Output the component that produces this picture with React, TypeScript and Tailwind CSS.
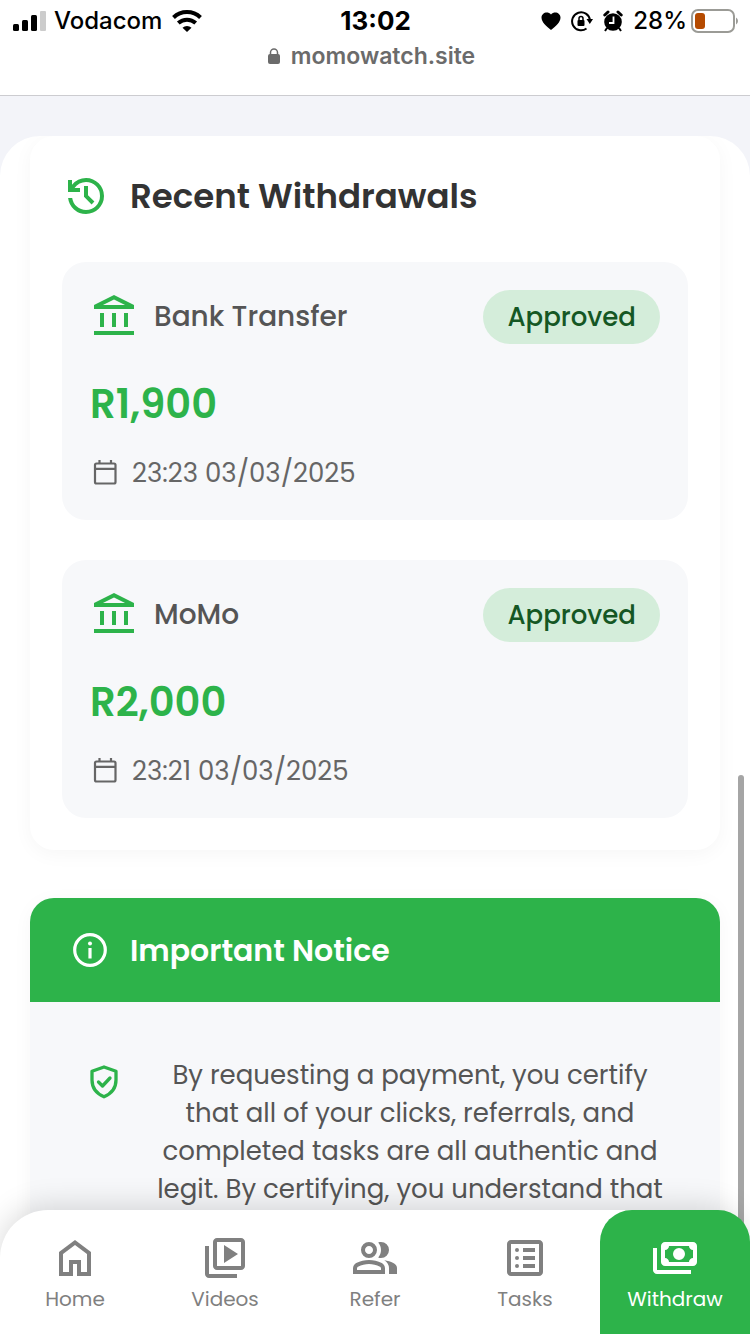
import React from "react";

type IconProps = { d: string; className: string };

function Icon({ d, className }: IconProps) {
  return (
    <svg viewBox="0 0 24 24" fill="currentColor" fillRule="evenodd" aria-hidden="true" className={className}>
      <path d={d} />
    </svg>
  );
}

const paths = {
  history:
    "M12 21q-3.45 0-6.0125-2.2875T3.05 13H5.1q.35 2.6 2.3125 4.3T12 19q2.925 0 4.9625-2.0375T19 12t-2.0375-4.9625T12 5q-1.725 0-3.225.8T6.25 8H9v2H3V4h2v2.35q1.275-1.6 3.1125-2.475T12 3q1.875 0 3.5125.7125t2.85 1.925 1.925 2.85T21 12t-.7125 3.5125-1.925 2.85-2.85 1.925T12 21m2.8-4.8L11 12.4V7h2v4.6l3.2 3.2z",
  bank: "M5 17v-7h2v7zm6 0v-7h2v7zm-9 4v-2h20v2zm15-4v-7h2v7zM2 8V6l10-5 10 5v2zm4.475-2h11.05L12 3.25z",
  home: "M6 19h3v-6h6v6h3v-9l-6-4.5L6 10zm-2 2V9l8-6 8 6v12h-7v-6h-2v6z",
  videos:
    "m11.5 14.5 7-4.5-7-4.5zM8 18q-.825 0-1.4125-.5875T6 16V4q0-.825.5875-1.4125T8 2h12q.825 0 1.4125.5875T22 4v12q0 .825-.5875 1.4125T20 18zm0-2h12V4H8zm-4 6q-.825 0-1.4125-.5875T2 20V6h2v14h14v2z",
  refer:
    "M1 20v-2.8q0-.85.4375-1.5625T2.6 14.55q1.55-.775 3.15-1.1625T9 13t3.25.3875 3.15 1.1625q.725.375 1.1625 1.0875T17 17.2V20zm18 0v-3q0-1.1-.6125-2.1125T16.65 13.15q1.275.15 2.4.5125t2.1.8875q.9.5 1.375 1.1125T23 17v3zM9 12q-1.65 0-2.825-1.175T5 8t1.175-2.825T9 4t2.825 1.175T13 8t-1.175 2.825T9 12m10-4q0 1.65-1.175 2.825T15 12q-.275 0-.7-.0625T13.6 11.8q.675-.8 1.0375-1.775T15 8t-.3625-2.025T13.6 4.2q.35-.125.7-.1625T15 4q1.65 0 2.825 1.175T19 8M3 18h12v-.8q0-.275-.1375-.5T14.5 16.35q-1.35-.675-2.725-1.0125T9 15t-2.775.3375T3.5 16.35q-.225.125-.3625.35T3 17.2zm6-8q.825 0 1.4125-.5875T11 8t-.5875-1.4125T9 6t-1.4125.5875T7 8t.5875 1.4125T9 10",
  tasks:
    "M5 21q-.825 0-1.4125-.5875T3 19V5q0-.825.5875-1.4125T5 3h14q.825 0 1.4125.5875T21 5v14q0 .825-.5875 1.4125T19 21zm0-2h14V5H5zM8 7a1 1 0 1 1 0 2 1 1 0 0 1 0-2m0 4a1 1 0 1 1 0 2 1 1 0 0 1 0-2m0 4a1 1 0 1 1 0 2 1 1 0 0 1 0-2m3-8h6v2h-6zm0 4h6v2h-6zm0 4h6v2h-6z",
  withdraw:
    "M14 13q-1.25 0-2.125-.875T11 10t.875-2.125T14 7t2.125.875T17 10t-.875 2.125T14 13m-7 3q-.825 0-1.4125-.5875T5 14V6q0-.825.5875-1.4125T7 4h14q.825 0 1.4125.5875T23 6v8q0 .825-.5875 1.4125T21 16zm2-2h10q0-.825.5875-1.4125T21 12V8q-.825 0-1.4125-.5875T19 6H9q0 .825-.5875 1.4125T7 8v4q.825 0 1.4125.5875T9 14m11 6H3q-.825 0-1.4125-.5875T1 18V7h2v11h17z",
};

function CalendarIcon() {
  return (
    <svg viewBox="0 0 30 30" fill="none" stroke="currentColor" strokeWidth="2.2" aria-hidden="true" className="size-[30px] shrink-0">
      <rect x="5" y="5.5" width="20.5" height="20" rx="1.5" />
      <path d="M5 10.800h20.500M9.500 2v3M21 2v3" />
    </svg>
  );
}

function InfoIcon() {
  return (
    <svg viewBox="0 0 40 40" fill="none" stroke="currentColor" strokeWidth="3.2" aria-hidden="true" className="size-10 shrink-0">
      <circle cx="20" cy="20" r="15.300" />
      <path d="M20 18v10.500" />
      <circle cx="20" cy="13.500" r="2" fill="currentColor" stroke="none" />
    </svg>
  );
}

function ShieldIcon() {
  return (
    <svg viewBox="0 0 40 40" fill="none" stroke="currentColor" strokeWidth="3.3" aria-hidden="true" className="mt-1.5 size-10 shrink-0 text-[#2db34a]">
      <path d="M20 5 32 9.200V18c0 8.500-5 13.800-12 16.800C13 31.800 8 26.500 8 18V9.200z" strokeLinejoin="round" />
      <path d="m14.500 20 4 4 7.500-8" strokeLinecap="round" strokeLinejoin="round" />
    </svg>
  );
}

function StatusBar() {
  return (
    <div className="grid h-[42px] grid-cols-[1fr_auto_1fr] items-center pr-[11px] pl-3 text-2xl font-medium text-black">
      <div className="flex items-center gap-2">
        <svg viewBox="0 0 34 22" aria-hidden="true" className="h-[22px] w-[34px]">
          <rect x="1" y="14" width="6" height="7" rx="1.500" />
          <rect x="10" y="10" width="6" height="11" rx="1.500" />
          <rect x="19" y="5" width="6" height="16" rx="1.500" />
          <rect x="28" y="1" width="6" height="20" rx="1" fill="#ccc" />
        </svg>
        <span>Vodacom</span>
        <svg viewBox="0 0 30 22" aria-hidden="true" className="ml-0.5 h-[22px] w-[30px]">
          <path d="M1.500 7.500a19.500 19.500 0 0 1 27 0" fill="none" stroke="black" strokeWidth="4" />
          <path d="M6.300 13a13 13 0 0 1 17.400 0" fill="none" stroke="black" strokeWidth="4" />
          <path d="M15 22l-4.500-4.300a6.500 6.500 0 0 1 9 0z" />
        </svg>
      </div>
      <span className="text-[26px] font-bold">13:02</span>
      <div className="flex items-center justify-end gap-2.5">
        <svg viewBox="0 0 20 18" aria-hidden="true" className="h-[18px] w-5">
          <path d="M10 18C5 14 .5 10 .5 5.500.5 1 6.500-1.500 10 2.500c3.500-4 9.500-1.500 9.500 3C19.500 10 15 14 10 18z" />
        </svg>
        <svg viewBox="0 0 22 22" aria-hidden="true" className="size-[22px]">
          <path d="M15.500 18.500A9 9 0 1 1 19 10" fill="none" stroke="black" strokeWidth="2" />
          <path d="M15.500 9h6.500L18.800 14z" />
          <rect x="6.500" y="10" width="7" height="6" rx="1" />
          <path d="M8 10V8.500a2 2 0 0 1 4 0V10" fill="none" stroke="black" strokeWidth="1.500" />
        </svg>
        <svg viewBox="0 0 20 22" aria-hidden="true" className="h-[22px] w-5">
          <circle cx="10" cy="12" r="8.800" />
          <path d="M1.800 5 5 2M18.200 5 15 2" stroke="black" strokeWidth="3" strokeLinecap="round" />
          <path d="m4 18-2 3M16 18l2 3" stroke="black" strokeWidth="2" />
          <path d="M10.500 6.500V13H6" fill="none" stroke="white" strokeWidth="1.800" />
        </svg>
        <span>28%</span>
        <svg viewBox="0 0 48 24" aria-hidden="true" className="-ml-1.5 h-6 w-12">
          <rect x="1" y="1" width="42" height="22" rx="6" fill="none" stroke="#9b9b96" strokeWidth="2" />
          <rect x="4" y="4" width="10" height="16" rx="3" fill="#b54a00" />
          <path d="M45 8.500q2 1 2 3.500t-2 3.500z" fill="#9b9b96" />
        </svg>
      </div>
    </div>
  );
}

type Withdrawal = { method: string; amount: string; date: string };

const withdrawals: Withdrawal[] = [
  { method: "Bank Transfer", amount: "R1,900", date: "23:23 03/03/2025" },
  { method: "MoMo", amount: "R2,000", date: "23:21 03/03/2025" },
];

function WithdrawalCard({ method, amount, date }: Withdrawal) {
  return (
    <li className="rounded-3xl bg-[#f7f8fa] p-7">
      <div className="flex items-center gap-4">
        <Icon d={paths.bank} className="size-12 shrink-0 text-[#2db34a]" />
        <span className="flex-1 text-[28px] leading-10 font-medium text-[#555]">{method}</span>
        <span className="flex h-[54px] items-center rounded-full bg-[#d4edda] px-6 text-[26px] font-medium text-[#155724]">
          Approved
        </span>
      </div>
      <p className="mt-8 text-[40px] leading-[56px] font-semibold text-[#2db34a]">{amount}</p>
      <p className="mt-[23px] mb-px flex h-9 items-center gap-3 text-[26px] text-[#666]">
        <CalendarIcon />
        {date}
      </p>
    </li>
  );
}

type Tab = { label: string; d: string; active?: boolean };

const tabs: Tab[] = [
  { label: "Home", d: paths.home },
  { label: "Videos", d: paths.videos },
  { label: "Refer", d: paths.refer },
  { label: "Tasks", d: paths.tasks },
  { label: "Withdraw", d: paths.withdraw, active: true },
];

export default function App() {
  return (
    <div className="flex h-screen flex-col overflow-hidden bg-[#f3f4f9] font-['Poppins','Inter',sans-serif]">
      <header className="h-24 shrink-0 border-b border-[#ccccd0] bg-white font-['Inter',sans-serif]">
        <StatusBar />
        <p className="flex h-7 items-center justify-center gap-2.5 pr-2 text-[23px] font-semibold text-[#6b6b6b]">
          <svg viewBox="0 0 14 16" aria-hidden="true" className="h-4 w-3.5">
            <rect x="1" y="6" width="12" height="10" rx="2" fill="currentColor" />
            <path d="M3.500 7V4.500a3.500 3.500 0 0 1 7 0V7" fill="none" stroke="currentColor" strokeWidth="1.500" />
          </svg>
          momowatch.site
        </p>
      </header>

      <main className="relative mt-10 -mb-12 min-h-0 flex-1 overflow-hidden rounded-t-[40px] bg-white px-[30px]">
        <section className="rounded-3xl bg-white px-8 pt-8 pb-8 shadow-[0_4px_20px_rgba(0,0,0,0.04)]">
          <h2 className="flex h-14 items-center gap-5 text-[34px] font-semibold text-[#333]">
            <Icon d={paths.history} className="size-12 shrink-0 text-[#2db34a]" />
            Recent Withdrawals
          </h2>
          <ul className="mt-[38px] flex flex-col gap-10">
            {withdrawals.map((w) => (
              <WithdrawalCard key={w.date} {...w} />
            ))}
          </ul>
        </section>

        <section className="mt-12 overflow-hidden rounded-3xl bg-[#f7f8fa] shadow-[0_4px_20px_rgba(0,0,0,0.04)]">
          <h2 className="flex h-[104px] items-center gap-5 bg-[#2db34a] px-10 text-[30px] font-semibold text-white">
            <InfoIcon />
            Important Notice
          </h2>
          <div className="flex gap-8 pt-[54px] pr-14 pb-40 pl-[54px]">
            <ShieldIcon />
            <p className="flex-1 text-center text-[26px] leading-[38px] text-[#555]">
              By requesting a payment, you certify that all of your clicks, referrals, and completed tasks are all
              authentic and legit. By certifying, you understand that
            </p>
          </div>
        </section>
        <div className="absolute top-[639px] right-1.5 h-[600px] w-1.5 rounded-full bg-[#a5a5a5]" />
      </main>

      <nav className="relative grid h-[124px] shrink-0 grid-cols-5 rounded-t-[48px] bg-white shadow-[0_-4px_30px_rgba(0,0,0,0.15)]">
        {tabs.map((t) => (
          <a
            key={t.label}
            href="#"
            aria-current={t.active ? "page" : undefined}
            className={
              t.active
                ? "flex flex-col items-center rounded-t-[32px] bg-[#2db34a] pt-6 text-xl text-white"
                : "flex flex-col items-center pt-6 text-xl text-[#808080]"
            }
          >
            <Icon d={t.d} className="size-12" />
            <span className="mt-0.5 leading-[30px]">{t.label}</span>
          </a>
        ))}
      </nav>
    </div>
  );
}
